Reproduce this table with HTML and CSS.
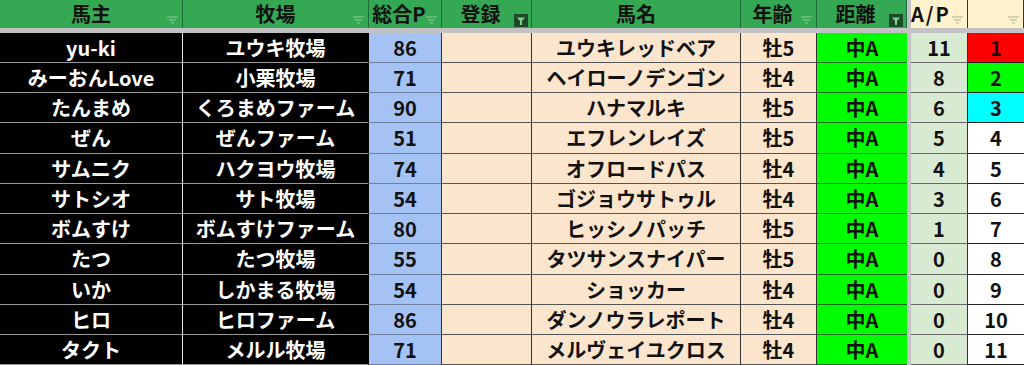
FILE: index.html
```html
<!DOCTYPE html>
<html lang="ja">
<head>
<meta charset="utf-8">
<link rel="stylesheet" href="styles.css">
</head>
<body>
<div class="sheet">
  <div class="h g">馬主<svg class="fi" viewBox="0 0 11 8"><path d="M0 1h11M2 4h7M4 7h3"/></svg></div>
  <div class="h g">牧場<svg class="fi" viewBox="0 0 11 8"><path d="M0 1h11M2 4h7M4 7h3"/></svg></div>
  <div class="h g sp">総合P<svg class="fi" viewBox="0 0 11 8"><path d="M0 1h11M2 4h7M4 7h3"/></svg></div>
  <div class="h g sp">登録<span class="fa"><svg viewBox="0 0 10 10"><path d="M1 1.5h8l-3 3.5v4h-2v-4z"/></svg></span></div>
  <div class="h g">馬名</div>
  <div class="h g sp">年齢<svg class="fi" viewBox="0 0 11 8"><path d="M0 1h11M2 4h7M4 7h3"/></svg></div>
  <div class="h g sp">距離<span class="fa"><svg viewBox="0 0 10 10"><path d="M1 1.5h8l-3 3.5v4h-2v-4z"/></svg></span></div>
  <div class="gap"></div>
  <div class="h y sp ap">A/P<svg class="fi" viewBox="0 0 11 8"><path d="M0 1h11M2 4h7M4 7h3"/></svg></div>
  <div class="h y"><svg class="fi" viewBox="0 0 11 8"><path d="M0 1h11M2 4h7M4 7h3"/></svg></div>
  <div class="sep"></div>

  <div class="c own">yu-ki</div><div class="c farm">ユウキ牧場</div><div class="c pt">86</div><div class="c pe reg"></div><div class="c pe nm">ユウキレッドベア</div><div class="c pe age">牡5</div><div class="c dist">中A</div><div class="gap"></div><div class="c apv">11</div><div class="c rk r1">1</div>
  <div class="c own">みーおんLove</div><div class="c farm">小栗牧場</div><div class="c pt">71</div><div class="c pe reg"></div><div class="c pe nm">ヘイローノデンゴン</div><div class="c pe age">牡4</div><div class="c dist">中A</div><div class="gap"></div><div class="c apv">8</div><div class="c rk r2">2</div>
  <div class="c own">たんまめ</div><div class="c farm">くろまめファーム</div><div class="c pt">90</div><div class="c pe reg"></div><div class="c pe nm">ハナマルキ</div><div class="c pe age">牡5</div><div class="c dist">中A</div><div class="gap"></div><div class="c apv">6</div><div class="c rk r3">3</div>
  <div class="c own">ぜん</div><div class="c farm">ぜんファーム</div><div class="c pt">51</div><div class="c pe reg"></div><div class="c pe nm">エフレンレイズ</div><div class="c pe age">牡5</div><div class="c dist">中A</div><div class="gap"></div><div class="c apv">5</div><div class="c rk">4</div>
  <div class="c own">サムニク</div><div class="c farm">ハクヨウ牧場</div><div class="c pt">74</div><div class="c pe reg"></div><div class="c pe nm">オフロードパス</div><div class="c pe age">牡4</div><div class="c dist">中A</div><div class="gap"></div><div class="c apv">4</div><div class="c rk">5</div>
  <div class="c own">サトシオ</div><div class="c farm">サト牧場</div><div class="c pt">54</div><div class="c pe reg"></div><div class="c pe nm">ゴジョウサトゥル</div><div class="c pe age">牡4</div><div class="c dist">中A</div><div class="gap"></div><div class="c apv">3</div><div class="c rk">6</div>
  <div class="c own">ボムすけ</div><div class="c farm">ボムすけファーム</div><div class="c pt">80</div><div class="c pe reg"></div><div class="c pe nm">ヒッシノパッチ</div><div class="c pe age">牡5</div><div class="c dist">中A</div><div class="gap"></div><div class="c apv">1</div><div class="c rk">7</div>
  <div class="c own">たつ</div><div class="c farm">たつ牧場</div><div class="c pt">55</div><div class="c pe reg"></div><div class="c pe nm">タツサンスナイパー</div><div class="c pe age">牡5</div><div class="c dist">中A</div><div class="gap"></div><div class="c apv">0</div><div class="c rk">8</div>
  <div class="c own">いか</div><div class="c farm">しかまる牧場</div><div class="c pt">54</div><div class="c pe reg"></div><div class="c pe nm">ショッカー</div><div class="c pe age">牡4</div><div class="c dist">中A</div><div class="gap"></div><div class="c apv">0</div><div class="c rk">9</div>
  <div class="c own">ヒロ</div><div class="c farm">ヒロファーム</div><div class="c pt">86</div><div class="c pe reg"></div><div class="c pe nm">ダンノウラレポート</div><div class="c pe age">牡4</div><div class="c dist">中A</div><div class="gap"></div><div class="c apv">0</div><div class="c rk">10</div>
  <div class="c own">タクト</div><div class="c farm">メルル牧場</div><div class="c pt">71</div><div class="c pe reg"></div><div class="c pe nm">メルヴェイユクロス</div><div class="c pe age">牡4</div><div class="c dist">中A</div><div class="gap"></div><div class="c apv">0</div><div class="c rk">11</div>
</div>
</body>
</html>
```

FILE: styles.css
```css
html, body {
  margin: 0;
  padding: 0;
  background: #ffffff;
}

body {
  font-family: "Noto Sans CJK JP", "Noto Sans", sans-serif;
  font-weight: 700;
  color: #111;
}

.sheet {
  display: grid;
  grid-template-columns: 183px 186px 73px 90px 209px 76px 90px 4px 57px 56px;
  grid-template-rows: 28px 5px 30px 30px 30px 31px 30px 30px 30px 31px 30px 30px 30px;
  width: 1024px;
  height: 365px;
  overflow: hidden;
  background: #c3c3c3;
}

.h, .c {
  position: relative;
  display: flex;
  align-items: center;
  justify-content: center;
  box-sizing: border-box;
  font-size: 20px;
  line-height: 1.3;
  white-space: nowrap;
}

.h {
  border-right: 1px solid #1f6b37;
  font-size: 20px;
  line-height: 1.3;
}

.h.g { background: #34a853; }
.h.y { background: #fff2cc; border-right: 1px solid #333; }
.h.y:last-child { border-right: 0; }

.h.sp { padding-right: 12px; }
.h.ap { justify-content: flex-start; padding-left: 0; letter-spacing: 2px; }

.fi {
  position: absolute;
  right: 4px;
  top: 16px;
  width: 11px;
  height: 8px;
}
.fi path {
  stroke: #8fc79c;
  stroke-width: 1.2;
  fill: none;
}
.h.y .fi path { stroke: #9fb58f; }

.fa {
  position: absolute;
  right: 3px;
  top: 14px;
  width: 14px;
  height: 13px;
  background: #1d4a2a;
  display: flex;
  align-items: center;
  justify-content: center;
}
.fa svg {
  width: 10px;
  height: 10px;
}
.fa path { fill: #7fd08e; }

.sep {
  grid-column: 1 / -1;
  background: #c3c3c3;
}

.gap { background: #c3c3c3; }

.c { border-bottom: 1px solid #555; }

.own {
  background: #000;
  color: #fff;
  border-right: 1px solid #e8e8e8;
  border-bottom-color: #9a9a9a;
}
.farm {
  background: #000;
  color: #fff;
  border-right: 1px solid #000;
  border-bottom-color: #9a9a9a;
}
.pt {
  background: #a4c2f4;
  border-right: 1px solid #333;
  border-bottom-color: #6d7f9e;
}
.pe {
  background: #fce5cd;
  border-right: 1px solid #333;
  border-bottom-color: #555;
}
.dist {
  background: #00ff00;
  border-bottom-color: #1f6a1f;
}
.apv {
  background: #d9ead3;
  border-right: 1px solid #333;
  border-bottom-color: #666;
}
.rk {
  background: #fff;
  border-bottom-color: #222;
}
.r1 { background: #ff0000; }
.r2 { background: #00ff00; }
.r3 { background: #00ffff; }
```
